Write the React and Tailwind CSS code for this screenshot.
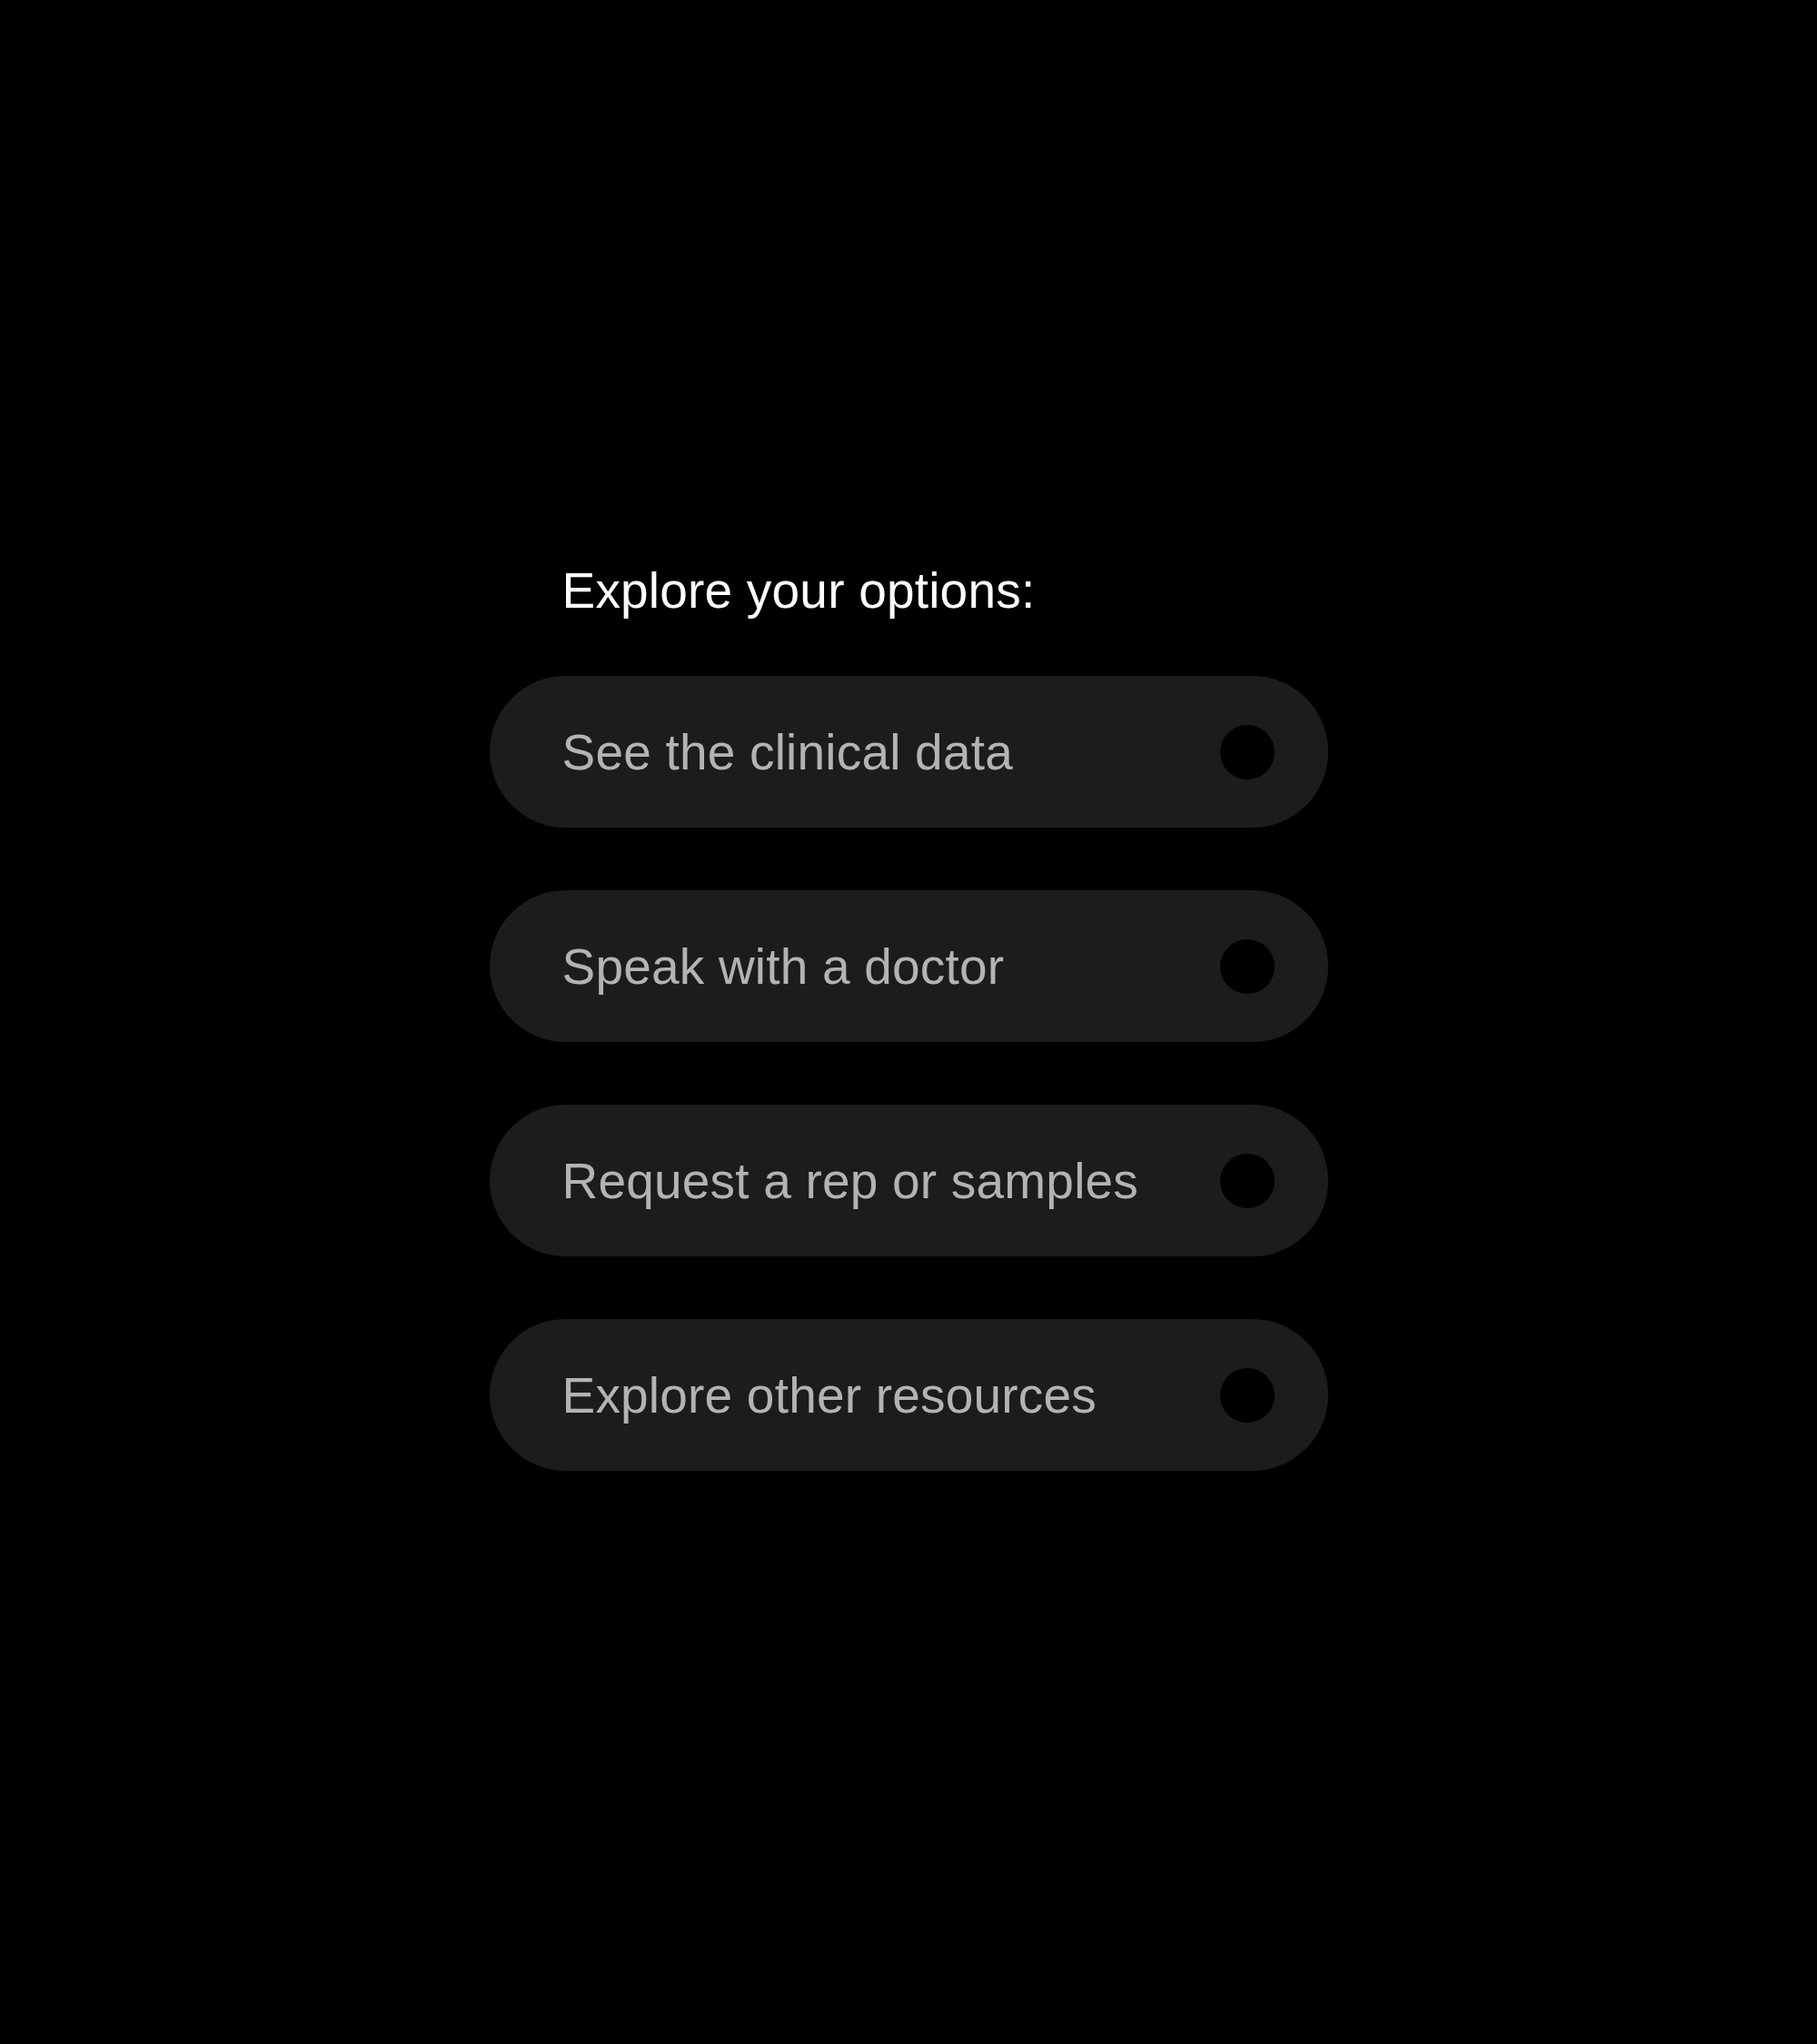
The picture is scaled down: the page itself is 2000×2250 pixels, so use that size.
const options = [
  "See the clinical data",
  "Speak with a doctor",
  "Request a rep or samples",
  "Explore other resources",
];

export default function App() {
  return (
    <div className="min-h-[2250px] w-full bg-black flex justify-center pt-[617px] font-['Liberation_Sans',Arial,sans-serif]">
      <div className="w-[923px] flex flex-col">
        <h2 className="pl-[80px] text-[55px] leading-[66px] tracking-[0.2px] text-white mb-[61px]">
          Explore your options:
        </h2>
        <div className="flex flex-col gap-[69px]">
          {options.map((label) => (
            <button
              key={label}
              className="h-[167px] w-full rounded-full bg-[#1c1c1d] flex items-center justify-between pl-[80px] pr-[59px] text-left"
            >
              <span className="text-[55px] leading-[66px] tracking-[0.2px] text-[#b3b3b3]">{label}</span>
              <span className="w-[60px] h-[60px] rounded-full bg-black shrink-0" />
            </button>
          ))}
        </div>
      </div>
    </div>
  );
}
